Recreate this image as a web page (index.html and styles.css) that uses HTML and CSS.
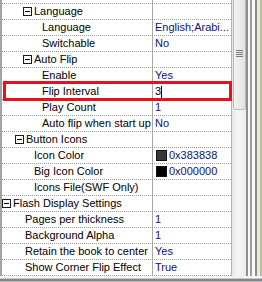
FILE: index.html
```html
<!DOCTYPE html>
<html lang="en">
<head>
  <meta charset="UTF-8" />
  <title>Property Grid</title>
  <link rel="stylesheet" href="styles.css">
</head>
<body>

  <div class="window">
    <div class="pane">
      <div class="grid">
        <div class="row stub"><span class="name"></span><span class="value"></span></div>

        <div class="row cat lv2"><span class="name"><i class="toggle"></i>Language</span><span class="value"></span></div>
        <div class="row lv2"><span class="name">Language</span><span class="value">English;Arabi...</span></div>
        <div class="row lv2"><span class="name">Switchable</span><span class="value">No</span></div>

        <div class="row cat lv2"><span class="name"><i class="toggle"></i>Auto Flip</span><span class="value"></span></div>
        <div class="row lv2"><span class="name">Enable</span><span class="value">Yes</span></div>
        <div class="row lv2 editing"><span class="name">Flip Interval</span><span class="value">3<i class="caret"></i></span></div>
        <div class="row lv2"><span class="name">Play Count</span><span class="value">1</span></div>
        <div class="row lv2"><span class="name">Auto flip when start up</span><span class="value">No</span></div>

        <div class="row cat lv1"><span class="name"><i class="toggle"></i>Button Icons</span><span class="value"></span></div>
        <div class="row lv1"><span class="name">Icon Color</span><span class="value"><i class="swatch grey"></i>0x383838</span></div>
        <div class="row lv1"><span class="name">Big Icon Color</span><span class="value"><i class="swatch black"></i>0x000000</span></div>
        <div class="row lv1"><span class="name">Icons File(SWF Only)</span><span class="value"></span></div>

        <div class="row cat lv0"><span class="name"><i class="toggle"></i>Flash Display Settings</span><span class="value"></span></div>
        <div class="row lv0"><span class="name">Pages per thickness</span><span class="value">1</span></div>
        <div class="row lv0"><span class="name">Background Alpha</span><span class="value">1</span></div>
        <div class="row lv0"><span class="name">Retain the book to center</span><span class="value">Yes</span></div>
        <div class="row lv0"><span class="name">Show Corner Flip Effect</span><span class="value">True</span></div>
      </div>

      <div class="scroll">
        <div class="thumb"><span class="grip"></span></div>
      </div>

      <div class="edge"></div>
    </div>

    <div class="shadow"></div>

    <div class="mark"></div>
  </div>

</body>
</html>
```

FILE: styles.css
```css
body {
  margin: 0;
  background: #fff;
  font-family: "Liberation Sans", Arial, sans-serif;
  font-size: 11px;
}

.window {
  position: relative;
  width: 262px;
  height: 282px;
  overflow: hidden;
  display: flex;
  flex-direction: column;
}

.pane {
  display: flex;
  flex: 1;
}

.grid {
  width: 229px;
  border-left: 2px solid #a4a4a4;
  border-right: 1px solid #b4b4b4;
  background: #fff;
}

.row {
  display: grid;
  grid-template-columns: 150px 78px;
  height: 15px;
  line-height: 15px;
  border-bottom: 1px dotted #9c9c9c;
}

.row.stub {
  height: 3px;
}

.name {
  display: flex;
  align-items: center;
  white-space: nowrap;
  overflow: hidden;
  color: #000;
}

.value {
  display: flex;
  align-items: center;
  border-left: 1px solid #a8a8a8;
  padding-left: 2px;
  white-space: nowrap;
  overflow: hidden;
  color: #10107a;
}

.lv0 .name { padding-left: 23px; }
.lv1 .name { padding-left: 32px; }
.lv2 .name { padding-left: 40px; }

.cat.lv0 .name { padding-left: 0; }
.cat.lv1 .name { padding-left: 13px; }
.cat.lv2 .name { padding-left: 21px; }

.toggle {
  position: relative;
  width: 7px;
  height: 7px;
  border: 1px solid #1a1a1a;
  margin-right: 2px;
  flex-shrink: 0;
}

.toggle::after {
  content: "";
  position: absolute;
  left: 1px;
  top: 3px;
  width: 5px;
  height: 1px;
  background: #000;
}

.editing .value {
  color: #000;
}

.caret {
  width: 1px;
  height: 12px;
  background: #000;
}

.swatch {
  width: 9px;
  height: 9px;
  margin: 0 2px 0 1px;
  border: 1px solid #111;
}

.swatch.grey { background: #383838; }
.swatch.black { background: #000; }

.scroll {
  position: relative;
  width: 14px;
  background: linear-gradient(to right, #e6e6e6, #f6f6f6 40%, #ececec);
}

.thumb {
  position: absolute;
  left: 1px;
  right: 0;
  top: -4px;
  height: 112px;
  border: 1px solid #b8b8b8;
  border-radius: 0 0 3px 3px;
  background: linear-gradient(to right, #f2f2f2, #e4e4e4);
  display: flex;
  align-items: center;
  justify-content: center;
}

.grip {
  width: 7px;
  height: 7px;
  background: repeating-linear-gradient(to bottom, #7a7a7a 0 1px, transparent 1px 2px);
}

.edge {
  flex: 1;
  background: linear-gradient(to right,
    #8e8e8e 0 2px, #fafafa 2px 4px,
    #9c9c9c 4px 6px, #fafafa 6px 9px,
    #8a8a8a 9px 11px, #e8e8e8 11px 14px,
    #b6c08c 14px);
}

.shadow {
  height: 6px;
  background: linear-gradient(to bottom, #f4f4f4 0 2px, #a0a0a0 3px, #6c6c6c 4px, #9a9a9a 5px, #d8d8d8 6px);
}

.mark {
  position: absolute;
  left: 3px;
  top: 81px;
  width: 223px;
  height: 14px;
  border: 3px solid #e8101c;
}
```
